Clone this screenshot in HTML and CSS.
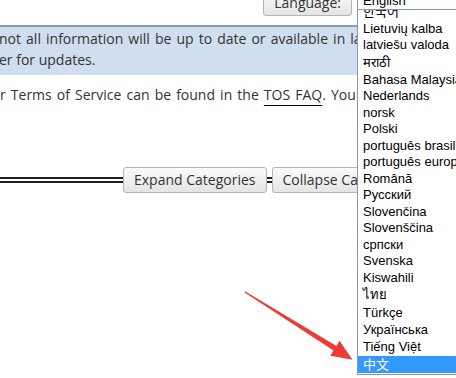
FILE: index.html
```html
<!DOCTYPE html>
<html lang="en">
<head>
    <meta charset="UTF-8">
    <meta name="viewport" content="width=device-width, initial-scale=1.0">
    <title>Categories</title>
    <link rel="stylesheet" href="styles.css">
</head>
<body>
    <!-- Top toolbar -->
    <div class="toolbar">
        <button class="btn">Language:</button>
    </div>

    <!-- Notice -->
    <div class="notice">
        <div class="notice-line spread">not all information will be up to date or available in languages other than English.</div>
        <div class="notice-line">er for updates.</div>
    </div>

    <p class="tos spread">r Terms of Service can be found in the <a href="#">TOS FAQ</a>. You can also contact us.</p>

    <!-- Category controls -->
    <div class="cat-bar">
        <span class="rule rule-left"></span>
        <button class="btn">Expand Categories</button>
        <span class="rule rule-mid"></span>
        <button class="btn">Collapse Categories</button>
        <span class="rule rule-right"></span>
    </div>

    <!-- Language dropdown (open) -->
    <div class="lang-select">
        <div class="lang-current">English</div>
        <div class="lang-popup">
            <ul class="lang-list">
                <li class="cjk-kr">한국어</li>
                <li>Lietuvių kalba</li>
                <li>latviešu valoda</li>
                <li class="tall">मराठी</li>
                <li>Bahasa Malaysia</li>
                <li>Nederlands</li>
                <li>norsk</li>
                <li>Polski</li>
                <li>português brasileiro</li>
                <li>português europeu</li>
                <li>Română</li>
                <li>Русский</li>
                <li>Slovenčina</li>
                <li>Slovenščina</li>
                <li>српски</li>
                <li>Svenska</li>
                <li>Kiswahili</li>
                <li class="tall">ไทย</li>
                <li class="mid">Türkçe</li>
                <li class="mid">Українська</li>
                <li class="tall">Tiếng Việt</li>
                <li class="mid cjk-sc selected">中文</li>
            </ul>
        </div>
    </div>

    <!-- Annotation arrow -->
    <svg class="arrow" width="456" height="378" viewBox="0 0 456 378">
        <polygon points="245,291.3 336.5,346 339.5,340.8 352.5,359.8 330.3,355.8 333.5,350.6 244.6,292.5" fill="#ef3b36"/>
    </svg>
</body>
</html>
```

FILE: styles.css
```css
body {
    margin: 0;
    width: 456px;
    height: 378px;
    overflow: hidden;
    position: relative;
    background: #fff;
    color: #333;
    font-family: "Open Sans", "DejaVu Sans", sans-serif;
    font-size: 14px;
    line-height: 21px;
}
.toolbar {
    display: flex;
    justify-content: flex-end;
    padding-right: 104px;
    margin-top: -10px;
}
.btn {
    height: 26px;
    padding: 0 10px;
    border: 1px solid #b4b4b4;
    border-radius: 3px;
    background: linear-gradient(to bottom, #fbfbfb, #e4e4e4);
    color: #333;
    font-family: "Open Sans", "DejaVu Sans", sans-serif;
    font-size: 14px;
    line-height: 24px;
    white-space: nowrap;
    flex-shrink: 0;
}
.notice {
    margin-top: 9px;
    padding: 1px 0 5px;
    border-top: 2px solid #8d9aa8;
    background: #cfdff0;
    white-space: nowrap;
    overflow: hidden;
}
.notice-line {
    margin-left: -1px;
}
/* justified lines get wider spaces */
.spread {
    word-spacing: 1.45px;
}
.tos {
    margin: 9px 0 0;
    white-space: nowrap;
}
.tos a {
    color: #333;
    text-decoration: underline;
    text-decoration-color: #000;
    text-underline-offset: 5px;
}
.cat-bar {
    display: flex;
    align-items: center;
    margin-top: 62px;
    overflow: hidden;
}
.rule {
    height: 0;
    flex-shrink: 0;
    border-top: 6px double #1e1e1e;
}
.rule-left {
    width: 123px;
}
.rule-mid {
    width: 5px;
}
.rule-right {
    width: 40px;
}

/* open select */
.lang-select {
    position: absolute;
    left: 357px;
    top: -8px;
    width: 99px;
    overflow: hidden;
    font-family: "Liberation Sans", Arial, sans-serif;
    font-size: 13px;
    color: #000;
}
.lang-current {
    height: 16px;
    line-height: 16px;
    padding-left: 5px;
    border: 1px solid #7f9db9;
    border-right: none;
    background: #fff;
}
.lang-popup {
    height: 364px;
    overflow: hidden;
    border-left: 1px solid #7f9db9;
    border-bottom: 1px solid #7f9db9;
    background: #fff;
}
.lang-list {
    list-style: none;
    margin: -6px 0 0;
    padding: 0;
}
.lang-list li {
    height: 16.5px;
    line-height: 16.5px;
    padding-left: 5px;
    white-space: nowrap;
}
.lang-list li.mid {
    height: 17px;
    line-height: 17px;
}
.lang-list li.tall {
    height: 18px;
    line-height: 18px;
}
.cjk-kr {
    font-family: "Liberation Sans", "Noto Sans CJK KR", sans-serif;
}
.cjk-sc {
    font-family: "Liberation Sans", "Noto Sans CJK SC", sans-serif;
}
.lang-list li.selected {
    background: #3399ff;
    color: #fff;
}

.arrow {
    position: absolute;
    left: 0;
    top: 0;
    pointer-events: none;
}
```
